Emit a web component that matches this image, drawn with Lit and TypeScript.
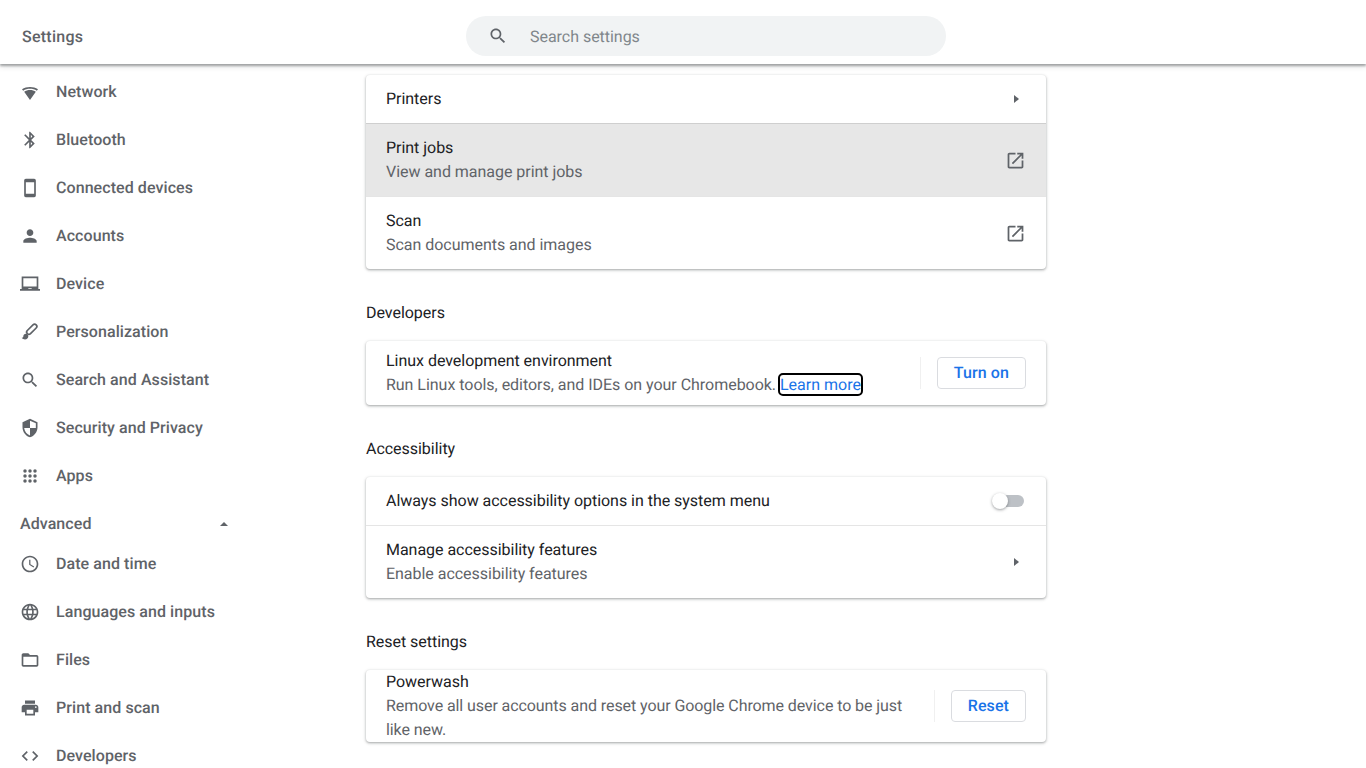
import { LitElement, html, css, svg } from "lit";
import { customElement } from "lit/decorators.js";

const P: Record<string, string> = {
  bluetooth: "M17.71 7.71L12 2h-1v7.59L6.41 5 5 6.41 10.59 12 5 17.59 6.41 19 11 14.41V22h1l5.71-5.71-4.3-4.29 4.3-4.29zM13 5.83l1.88 1.88L13 9.59V5.83zm1.88 10.46L13 18.17v-3.76l1.88 1.88z",
  phone: "M17 1.01L7 1c-1.1 0-2 .9-2 2v18c0 1.1.9 2 2 2h10c1.1 0 2-.9 2-2V3c0-1.1-.9-1.99-2-1.99zM17 19H7V5h10v14z",
  person: "M12 12c2.21 0 4-1.79 4-4s-1.79-4-4-4-4 1.79-4 4 1.79 4 4 4zm0 2c-2.67 0-8 1.34-8 4v2h16v-2c0-2.66-5.33-4-8-4z",
  laptop: "M22 18V3H2v15H0v2h24v-2h-2zm-8 0h-4v-1h4v1zm6-3H4V5h16v10z",
  search: "M15.5 14h-.79l-.28-.27C15.41 12.59 16 11.11 16 9.5 16 5.91 13.09 3 9.5 3S3 5.91 3 9.5 5.91 16 9.5 16c1.61 0 3.09-.59 4.23-1.57l.27.28v.79l5 4.99L20.49 19l-4.99-5zm-6 0C7.01 14 5 11.99 5 9.5S7.01 5 9.5 5 14 7.01 14 9.5 11.99 14 9.5 14z",
  shield: "M12 1L3 5v6c0 5.55 3.84 10.74 9 12 5.16-1.26 9-6.45 9-12V5l-9-4zm0 10.99h7c-.53 4.12-3.28 7.79-7 8.94V12H5V6.3l7-3.11v8.8z",
  clock: "M11.99 2C6.47 2 2 6.48 2 12s4.47 10 9.99 10C17.52 22 22 17.52 22 12S17.52 2 11.99 2zM12 20c-4.42 0-8-3.58-8-8s3.58-8 8-8 8 3.58 8 8-3.58 8-8 8zm.5-13H11v6l5.25 3.15.75-1.23-4.5-2.67z",
  globe: "M11.99 2C6.47 2 2 6.48 2 12s4.47 10 9.99 10C17.52 22 22 17.52 22 12S17.52 2 11.99 2zm6.93 6h-2.95c-.32-1.25-.78-2.45-1.38-3.56 1.84.63 3.37 1.91 4.33 3.56zM12 4.04c.83 1.2 1.48 2.53 1.91 3.96h-3.82c.43-1.43 1.08-2.76 1.91-3.96zM4.26 14C4.1 13.36 4 12.69 4 12s.1-1.36.26-2h3.38c-.08.66-.14 1.32-.14 2 0 .68.06 1.34.14 2H4.26zm.82 2h2.95c.32 1.25.78 2.45 1.38 3.56-1.84-.63-3.37-1.9-4.33-3.56zm2.95-8H5.08c.96-1.66 2.49-2.93 4.33-3.56C8.81 5.55 8.35 6.75 8.03 8zM12 19.96c-.83-1.2-1.48-2.53-1.91-3.96h3.82c-.43 1.43-1.08 2.76-1.91 3.96zM14.34 14H9.66c-.09-.66-.16-1.32-.16-2 0-.68.07-1.35.16-2h4.68c.09.65.16 1.32.16 2 0 .68-.07 1.34-.16 2zm.25 5.56c.6-1.11 1.06-2.31 1.38-3.56h2.95c-.96 1.65-2.49 2.93-4.33 3.56zM16.36 14c.08-.66.14-1.32.14-2 0-.68-.06-1.34-.14-2h3.38c.16.64.26 1.31.26 2s-.1 1.36-.26 2h-3.38z",
  folder: "M20 6h-8l-2-2H4c-1.1 0-1.99.9-1.99 2L2 18c0 1.1.9 2 2 2h16c1.1 0 2-.9 2-2V8c0-1.1-.9-2-2-2zm0 12H4V8h16v10z",
  print: "M19 8H5c-1.66 0-3 1.34-3 3v6h4v4h12v-4h4v-6c0-1.66-1.34-3-3-3zm-3 11H8v-5h8v5zm3-7c-.55 0-1-.45-1-1s.45-1 1-1 1 .45 1 1-.45 1-1 1zm-1-9H6v4h12V3z",
  code: "M9.4 16.6L4.8 12l4.6-4.6L8 6l-6 6 6 6 1.4-1.4zm5.2 0l4.6-4.6-4.6-4.6L16 6l6 6-6 6-1.4-1.4z",
  wifi: "M12 6C8.5 6 5.2 7 2.4 8.8L3.8 10.5C6 9 9 8.2 12 8.2s6 .8 8.2 2.3L21.6 8.8C18.8 7 15.5 6 12 6zM5 11.8L12 21.6 19 11.8C17 10.4 14.6 9.6 12 9.6S7 10.4 5 11.8z",
  open: "M19 19H5V5h7V3H5c-1.11 0-2 .9-2 2v14c0 1.1.89 2 2 2h14c1.1 0 2-.9 2-2v-7h-2v7zM14 3v2h3.59l-9.83 9.83 1.41 1.41L19 6.41V10h2V3h-7z",
};

const dots = [6, 12, 18].flatMap((y) =>
  [6, 12, 18].map((x) => svg`<circle cx=${x} cy=${y} r="2.1"></circle>`)
);

const brush = svg`
  <path d="M7 14c-1.66 0-3 1.34-3 3 0 1.31-1.16 2-2 2 .92 1.22 2.49 2 4 2 2.21 0 4-1.79 4-4 0-1.66-1.34-3-3-3z"></path>
  <rect x="6.6" y="6" width="15" height="5.4" rx="2.7" transform="rotate(-45 14.1 8.7)" fill="none" stroke="#5f6368" stroke-width="2"></rect>
`;

const glyph = (name: string) => {
  if (name === "apps") return dots;
  if (name === "brush") return brush;
  return svg`<path d=${P[name]}></path>`;
};

const icon = (name: string, cls = "") =>
  html`<svg class="ic ${cls}" viewBox="0 0 24 24" aria-hidden="true">${glyph(name)}</svg>`;

const mainNav = [
  ["wifi", "Network"],
  ["bluetooth", "Bluetooth"],
  ["phone", "Connected devices"],
  ["person", "Accounts"],
  ["laptop", "Device"],
  ["brush", "Personalization"],
  ["search", "Search and Assistant"],
  ["shield", "Security and Privacy", "flip"],
  ["apps", "Apps"],
];
const advNav = [
  ["clock", "Date and time"],
  ["globe", "Languages and inputs"],
  ["folder", "Files"],
  ["print", "Print and scan"],
  ["code", "Developers"],
];

@customElement("app-root")
export class AppRoot extends LitElement {
  static styles = css`
    :host {
      display: block;
      width: 1366px;
      height: 768px;
      overflow: hidden;
      background: #fff;
      font-family: Roboto, "Liberation Sans", sans-serif;
      font-size: 16px;
      line-height: 24px;
      color: #202124;
      text-rendering: geometricPrecision;
    }
    .ic { width: 20px; height: 20px; fill: #5f6368; flex: none; display: block; }
    .flip { transform: scaleX(-1); }
    .ext { width: 21px; height: 21px; margin-right: 2px; }
    header {
      position: relative;
      z-index: 2;
      height: 64px;
      box-sizing: border-box;
      padding-top: 8px;
      display: flex;
      align-items: center;
      background: #fff;
      box-shadow: 0 2px 2px rgba(60, 64, 67, 0.4), 0 2px 6px rgba(60, 64, 67, 0.2);
    }
    .title { width: 466px; padding: 2px 0 0 22px; box-sizing: border-box; font-weight: 500; color: #5f6368; letter-spacing: 0.25px; }
    .search {
      width: 480px;
      height: 40px;
      border-radius: 20px;
      background: #f1f3f4;
      display: flex;
      align-items: center;
      padding-left: 22px;
      box-sizing: border-box;
      gap: 22px;
      color: #80868b;
    }
    .ph { padding-top: 2px; letter-spacing: -0.03px; }
    .body { display: flex; height: 704px; overflow: hidden; }
    nav { width: 366px; flex: none; padding: 4px 0 0 20px; box-sizing: border-box; letter-spacing: 0.07px; }
    .item {
      height: 48px;
      display: flex;
      align-items: center;
      gap: 16px;
      font-weight: 500;
      color: #5f6368;
    }
    .adv {
      height: 32px;
      margin-top: 8px;
      width: 208px;
      display: flex;
      align-items: center;
      justify-content: space-between;
      font-weight: 500;
      color: #5f6368;
    }
    .up { width: 0; height: 0; border: 4px solid transparent; border-top: 0; border-bottom: 4.5px solid #5f6368; }
    main { width: 680px; flex: none; padding-top: 11px; letter-spacing: -0.03px; }
    .head { padding: 32px 0 16px; }
    .card {
      border-radius: 4px;
      background: #fff;
      box-shadow: 0 1px 2px rgba(60, 64, 67, 0.3), 0 1px 3px 1px rgba(60, 64, 67, 0.15);
      overflow: hidden;
    }
    .row {
      display: flex;
      align-items: center;
      padding: 0 18px 0 20px;
      box-sizing: border-box;
    }
    .row + .row { border-top: 1px solid rgba(0, 0, 0, 0.1); }
    .r48 { height: 48px; }
    .r73 { height: 73px; }
    .r64 { height: 64px; }
    .r72 { height: 72px; }
    .hover { background: #e7e7e7; }
    .grow { flex: 1; min-width: 0; }
    .sub { color: #5f6368; }
    .tight { letter-spacing: -0.08px; }
    .arrow { width: 24px; display: flex; justify-content: center; }
    .tri { width: 0; height: 0; border: 4px solid transparent; border-right: 0; border-left: 5px solid #5f6368; }
    a { color: #1a73e8; text-decoration: none; outline: 2px solid #000; border-radius: 3px; letter-spacing: 0; }
    .end { padding-right: 20px; }
    .sep { width: 1px; height: 32px; background: rgba(0, 0, 0, 0.06); margin: 0 16px; flex: none; }
    .btn {
      height: 32px;
      box-sizing: border-box;
      border: 1px solid #dadce0;
      border-radius: 4px;
      padding: 0 16px;
      display: flex;
      align-items: center;
      color: #1a73e8;
      font-weight: 500;
      background: #fff;
      flex: none;
      letter-spacing: 0.1px;
    }
    .toggle { position: relative; width: 32px; height: 12px; margin-right: 2px; }
    .track { position: absolute; left: 4px; right: 0; top: 0; bottom: 0; border-radius: 6px; background: #bdc1c6; }
    .thumb {
      position: absolute;
      left: 0;
      top: -2px;
      width: 16px;
      height: 16px;
      border-radius: 50%;
      background: #fff;
      box-shadow: 0 1px 3px rgba(60, 64, 67, 0.5);
    }
  `;

  private navItem = ([ic, label, cls]: string[]) =>
    html`<div class="item">${icon(ic, cls ?? "")}<span>${label}</span></div>`;

  render() {
    return html`
      <header>
        <div class="title">Settings</div>
        <div class="search">${icon("search")}<span class="ph">Search settings</span></div>
      </header>
      <div class="body">
        <nav>
          ${mainNav.map(this.navItem)}
          <div class="adv"><span>Advanced</span><span class="up"></span></div>
          ${advNav.map(this.navItem)}
        </nav>
        <main>
          <div class="card">
            <div class="row r48"><div class="grow">Printers</div><div class="arrow"><span class="tri"></span></div></div>
            <div class="row r73 hover">
              <div class="grow"><div>Print jobs</div><div class="sub">View and manage print jobs</div></div>
              ${icon("open", "ext")}
            </div>
            <div class="row r73">
              <div class="grow"><div>Scan</div><div class="sub">Scan documents and images</div></div>
              ${icon("open", "ext")}
            </div>
          </div>
          <div class="head">Developers</div>
          <div class="card">
            <div class="row r64 end">
              <div class="grow"><div>Linux development environment</div>
                <div class="sub">Run Linux tools, editors, and IDEs on your Chromebook. <a href="#">Learn more</a></div></div>
              <div class="sep"></div>
              <div class="btn">Turn on</div>
            </div>
          </div>
          <div class="head">Accessibility</div>
          <div class="card">
            <div class="row r48 end">
              <div class="grow">Always show accessibility options in the system menu</div>
              <div class="toggle"><div class="track"></div><div class="thumb"></div></div>
            </div>
            <div class="row r73">
              <div class="grow"><div>Manage accessibility features</div><div class="sub">Enable accessibility features</div></div>
              <div class="arrow"><span class="tri"></span></div>
            </div>
          </div>
          <div class="head">Reset settings</div>
          <div class="card">
            <div class="row r72 end">
              <div class="grow"><div>Powerwash</div>
                <div class="sub tight">Remove all user accounts and reset your Google Chrome device to be just like new.</div></div>
              <div class="sep"></div>
              <div class="btn">Reset</div>
            </div>
          </div>
        </main>
      </div>
    `;
  }
}
